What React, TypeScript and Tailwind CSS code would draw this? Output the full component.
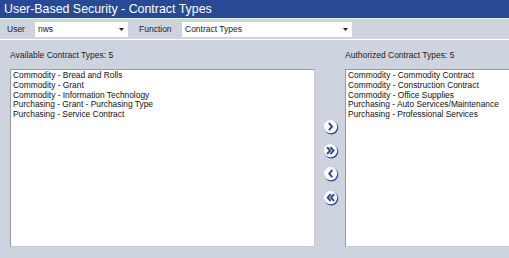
import React from 'react'

const available = [
    'Commodity - Bread and Rolls',
    'Commodity - Grant',
    'Commodity - Information Technology',
    'Purchasing - Grant - Purchasing Type',
    'Purchasing - Service Contract',
]

const authorized = [
    'Commodity - Commodity Contract',
    'Commodity - Construction Contract',
    'Commodity - Office Supplies',
    'Purchasing - Auto Services/Maintenance',
    'Purchasing - Professional Services',
]

function Select({ value, className }: { value: string; className: string }) {
    return (
        <div className={`flex h-[15px] items-center justify-between bg-white pl-[3px] pr-[4px] ${className}`}>
            <span>{value}</span>
            <svg width="5" height="3" viewBox="0 0 5 3">
                <path d="M0 0 H5 L2.5 3 Z" fill="#222" />
            </svg>
        </div>
    )
}

function MoveButton({ kind }: { kind: 'right' | 'allRight' | 'left' | 'allLeft' }) {
    const paths: Record<string, string> = {
        right: 'M6.4 4.6 L9 7.6 L6.4 10.6',
        left: 'M8.8 4.6 L6.2 7.6 L8.8 10.6',
        allRight: 'M4.6 4.8 L7.2 7.6 L4.6 10.4 M8 4.8 L10.6 7.6 L8 10.4',
        allLeft: 'M7.2 4.8 L4.6 7.6 L7.2 10.4 M10.6 4.8 L8 7.6 L10.6 10.4',
    }
    return (
        <button type="button" className="block h-[16px] w-[16px]">
            <svg width="16" height="16" viewBox="0 0 16 16">
                <circle cx="8.4" cy="8.6" r="6.9" fill="#2c4c9c" />
                <circle cx="7.6" cy="7.6" r="6.6" fill="#ffffff" />
                <path d={paths[kind]} fill="none" stroke="#2a4898" strokeWidth="2" strokeLinecap="round" strokeLinejoin="round" />
            </svg>
        </button>
    )
}

function ListBox({ items }: { items: string[] }) {
    return (
        <div className="h-[178px] w-[305px] shrink-0 border border-[#c9c9c9] border-l-[#9a9a9a] border-t-[#9a9a9a] bg-white px-[2px] pt-[1px] text-[8.4px] leading-[9.75px] text-[#111]">
            {items.map((item) => (
                <div key={item} className="whitespace-nowrap">
                    {item}
                </div>
            ))}
        </div>
    )
}

export default function App() {
    return (
        <div className="flex h-[258px] w-[509px] flex-col overflow-hidden bg-[#cdd4e0] font-['Liberation_Sans',Arial,sans-serif] text-[#222]">
            <div className="flex h-[18px] shrink-0 items-center bg-[#284994] pl-[4px] text-[12.4px] text-white">
                User-Based Security - Contract Types
            </div>
            <div className="h-[1px] shrink-0 bg-[#e9edf3]" />
            <div className="flex h-[20px] shrink-0 items-center text-[8.5px]">
                <span className="ml-[7px] w-[28px]">User</span>
                <Select value="nws" className="w-[93px]" />
                <span className="ml-[11px] w-[43px]">Function</span>
                <Select value="Contract Types" className="w-[170px]" />
            </div>
            <div className="h-[1px] shrink-0 bg-white" />
            <div className="flex gap-0 pl-[10px] pt-[10px]">
                <div className="flex shrink-0 flex-col">
                    <div className="h-[10px] text-[8.5px] leading-[10px]">Available Contract Types: 5</div>
                    <div className="mt-[9px]">
                        <ListBox items={available} />
                    </div>
                </div>
                <div className="flex w-[30px] shrink-0 flex-col items-center gap-[7.5px] pl-[1px] pt-[69px]">
                    <MoveButton kind="right" />
                    <MoveButton kind="allRight" />
                    <MoveButton kind="left" />
                    <MoveButton kind="allLeft" />
                </div>
                <div className="flex shrink-0 flex-col">
                    <div className="h-[10px] text-[8.5px] leading-[10px]">Authorized Contract Types: 5</div>
                    <div className="mt-[9px]">
                        <ListBox items={authorized} />
                    </div>
                </div>
            </div>
        </div>
    )
}
